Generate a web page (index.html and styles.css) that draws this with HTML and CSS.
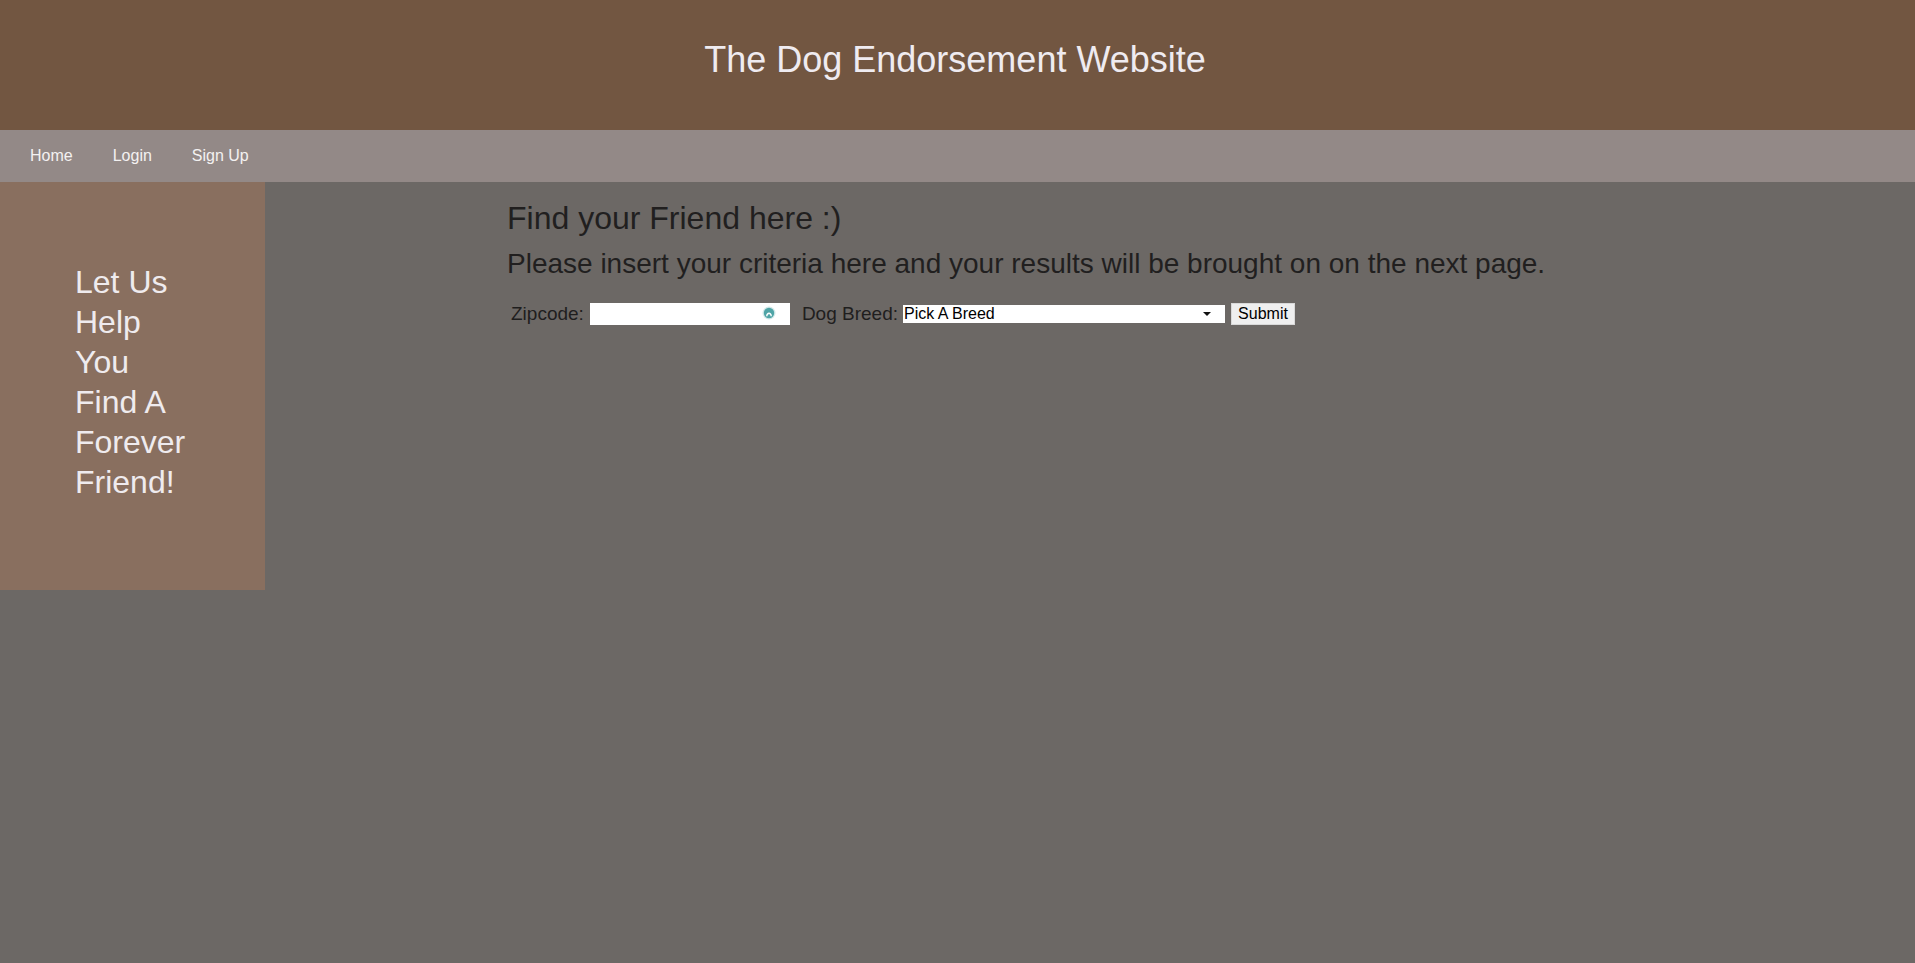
FILE: index.html
```html
<!DOCTYPE html>
<html lang="en">
<head>
<meta charset="utf-8">
<title>The Dog Endorsement Website</title>
<link rel="stylesheet" href="styles.css">
</head>
<body>
<header class="site-header">
  <h1 class="site-title">The Dog Endorsement Website</h1>
</header>
<nav class="site-nav">
  <a class="nav-link" href="#">Home</a>
  <a class="nav-link" href="#">Login</a>
  <a class="nav-link" href="#">Sign Up</a>
</nav>
<div class="layout">
  <aside class="sidebar">
    <p class="sidebar-text">Let Us Help You Find A Forever Friend!</p>
  </aside>
  <main class="content">
    <h2 class="content-title">Find your Friend here :)</h2>
    <p class="content-sub">Please insert your criteria here and your results will be brought on on the next page.</p>
    <form class="search-form">
      <label class="form-label first" for="zip">Zipcode:</label>
      <span class="input-wrap">
        <input class="zip-input" id="zip" type="text">
        <svg class="input-icon" width="14" height="14" viewBox="0 0 14 14" aria-hidden="true">
          <circle cx="7" cy="7" r="6.5" fill="#d3e9e9"/>
          <circle cx="7" cy="7" r="5.2" fill="#4fa4a6"/>
          <path d="M4.1 10.2 C4.1 5.4 9.9 5.4 9.9 10.2 L8.5 10.2 C8.5 7.7 5.5 7.7 5.5 10.2 Z" fill="#ffffff"/>
        </svg>
      </span>
      <label class="form-label second" for="breed">Dog Breed:</label>
      <span class="select-wrap">
        <select class="breed-select" id="breed">
          <option>Pick A Breed</option>
        </select>
      </span>
      <button class="submit-btn" type="button">Submit</button>
    </form>
  </main>
</div>
</body>
</html>
```
FILE: styles.css
```css
html, body {
  margin: 0;
  padding: 0;
}
body {
  background: #6c6865;
  font-family: "Liberation Sans", Arial, sans-serif;
  min-height: 963px;
}
.site-header {
  background: #725641;
  height: 130px;
  box-sizing: border-box;
  padding: 39px 5px 0 0;
  text-align: center;
}
.site-title {
  margin: 0;
  font-size: 36px;
  line-height: 42px;
  font-weight: normal;
  color: #efebf0;
}
.site-nav {
  background: #938987;
  height: 52px;
  box-sizing: border-box;
  display: flex;
  align-items: center;
  padding-left: 10px;
}
.nav-link {
  color: #f3f1f1;
  text-decoration: none;
  font-size: 16px;
  padding: 0 20px;
}
.layout {
  display: flex;
  align-items: flex-start;
}
.sidebar {
  background: #896f5f;
  width: 265px;
  flex: 0 0 265px;
  box-sizing: border-box;
  padding: 80px 76px 88px 75px;
}
.sidebar-text {
  margin: 0;
  font-size: 32px;
  line-height: 40px;
  color: #efebee;
}
.content {
  flex: 1;
  padding-left: 242px;
  padding-top: 18px;
  color: #211f1f;
}
.content-title {
  margin: 0;
  font-size: 32px;
  line-height: 36px;
  font-weight: normal;
}
.content-sub {
  margin: 12px 0 0 0;
  font-size: 28px;
  line-height: 32px;
}
.search-form {
  display: flex;
  align-items: center;
  margin-top: 23px;
  height: 22px;
}
.form-label {
  font-size: 19px;
  line-height: 20px;
  color: #1f1e1e;
}
.form-label.first {
  margin-left: 4px;
  margin-right: 6px;
}
.form-label.second {
  margin-left: 12px;
  margin-right: 5px;
}
.input-wrap {
  position: relative;
  display: block;
  width: 200px;
  height: 22px;
}
.zip-input {
  display: block;
  width: 200px;
  height: 22px;
  box-sizing: border-box;
  border: 0;
  padding: 0 2px;
  margin: 0;
  background: #ffffff;
  font-family: "Liberation Sans", Arial, sans-serif;
  font-size: 16px;
  outline: none;
}
.input-icon {
  position: absolute;
  left: 172px;
  top: 3px;
}
.select-wrap {
  position: relative;
  display: block;
  width: 322px;
  height: 18px;
}
.select-wrap::after {
  content: "";
  position: absolute;
  left: 300px;
  top: 7px;
  width: 0;
  height: 0;
  border-left: 4px solid transparent;
  border-right: 4px solid transparent;
  border-top: 4px solid #111111;
  pointer-events: none;
}
.breed-select {
  -webkit-appearance: none;
  appearance: none;
  display: block;
  width: 322px;
  height: 18px;
  box-sizing: border-box;
  border: 0;
  border-radius: 0;
  margin: 0;
  padding: 0 0 0 1px;
  background: #ffffff;
  color: #000000;
  font-family: "Liberation Sans", Arial, sans-serif;
  font-size: 16px;
  line-height: 18px;
  outline: none;
}
.submit-btn {
  margin-left: 6px;
  width: 64px;
  height: 22px;
  box-sizing: border-box;
  padding: 0 6px;
  border: 1px solid #d9d9d9;
  border-radius: 0;
  background: #efefef;
  color: #000000;
  font-family: "Liberation Sans", Arial, sans-serif;
  font-size: 16px;
  line-height: 20px;
}
```
